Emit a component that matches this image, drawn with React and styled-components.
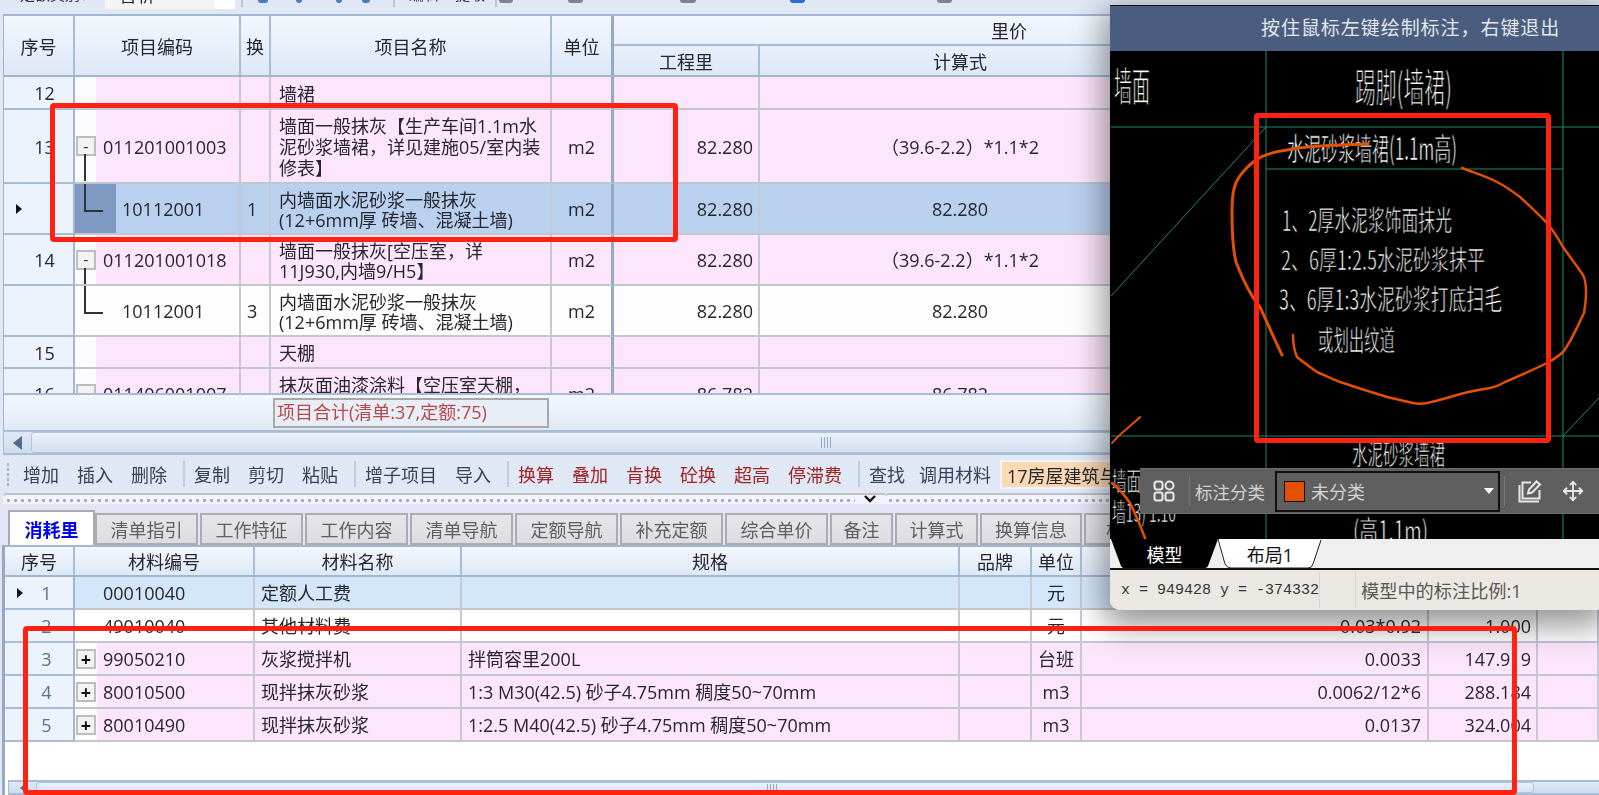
import React from "react";
import styled, { createGlobalStyle } from "styled-components";
import { Move } from "lucide-react";

const GlobalStyle = createGlobalStyle`
  html, body {
    margin: 0;
    padding: 0;
    background: #fff;
    overflow: hidden;
  }
  * {
    box-sizing: border-box;
  }
`;

const UI_FONT = `"Open Sans", "Noto Sans CJK SC", sans-serif`;
const UPPER_COLS = "71px 166px 30px 281px 62px 146px 402px 242px";
const LOWER_COLS = "70px 180px 207px 498px 72px 50px 347px 109px 61px";
const PINK = "#fde5fb";

const Page = styled.div`
  position: relative;
  width: 1599px;
  height: 795px;
  overflow: hidden;
  font-family: ${UI_FONT};
  font-size: 18px;
  color: #26262e;
`;

const Main = styled.div`
  width: 1599px;
  height: 795px;
  display: flex;
  flex-direction: column;
  background: #e0e8f6;
  filter: blur(0.45px);
`;

/* top toolbar, cut off by the screenshot */
const TopBar = styled.div`
  height: 14px;
  flex: none;
  display: flex;
  align-items: flex-end;
  overflow: hidden;
  padding-left: 20px;
  background: #e0e8f6;
`;

const TopLabel = styled.span`
  margin-bottom: 11px;
  margin-left: ${p => p.$ml || 0}px;
  line-height: 18px;
  white-space: nowrap;
  font-size: 15px;
  color: #334;
`;

const TopCombo = styled.div`
  width: 130px;
  height: 14px;
  margin: 0 0 5px 10px;
  padding: 0 14px;
  background: #f4f4f4;
  border-right: 20px solid #fff;
  line-height: 0;
  font-size: 18px;
`;

const TopChip = styled.i`
  width: ${p => p.$w || 14}px;
  height: ${p => p.$h || 8}px;
  margin: 0 0 ${p => p.$mb || 11}px ${p => p.$ml}px;
  border-radius: 0 0 3px 3px;
  background: ${p => p.$c || "#7d8490"};
`;

const TopSep = styled.i`
  width: 2px;
  height: 14px;
  margin: 0 0 7px ${p => p.$ml}px;
  background: #bcc4d2;
`;

const GridArea = styled.div`
  margin-left: 3px;
  border-left: 1px solid #9fb3cf;
  width: 1596px;
  flex: none;
`;

const HeaderGrid = styled.div`
  display: grid;
  grid-template-columns: ${p => p.$cols};
  grid-template-rows: ${p => p.$rows};
  border-top: 2px solid #a3b6d0;
  border-bottom: 2px solid #a3b6d0;
  background: linear-gradient(#f3f7fe, #dde8f6);
`;

const HeadCell = styled.div`
  display: flex;
  align-items: center;
  justify-content: center;
  grid-row: ${p => p.$row || "auto"};
  grid-column: ${p => p.$col || "auto"};
  border-right: ${p => (p.$thick ? "3px solid #93a9c8" : "2px solid #a9bcd6")};
  border-bottom: ${p => (p.$under ? "2px solid #a9bcd6" : "0")};
  ${p => p.$noRight && "border-right: 0;"}
  white-space: nowrap;
`;

const Body = styled.div`
  height: ${p => p.$h}px;
  overflow: hidden;
`;

const Row = styled.div`
  display: grid;
  grid-template-columns: ${p => p.$cols};
  height: ${p => p.$h}px;
  background: ${p => p.$bg};
`;

const Cell = styled.div`
  display: flex;
  align-items: center;
  min-width: 0;
  padding: 2px ${p => p.$pad ?? 0}px 0;
  justify-content: ${p => p.$align || "flex-start"};
  border-right: ${p => (p.$thick ? "3px solid #93a9c8" : "2px solid #c6c8d2")};
  border-bottom: 2px solid #c3c5cf;
  line-height: ${p => p.$lh || 21}px;
  white-space: nowrap;
  overflow: hidden;
`;

const SeqCell = styled(Cell)`
  position: relative;
  justify-content: center;
  background: #edf3fc;
  border-right: 2px solid #a3b6d0;
  border-bottom: 2px solid #a9bcd6;
  color: ${p => p.$tone || "inherit"};
  padding-left: ${p => p.$shift || 0}px;
`;

const RowArrow = styled.i`
  position: absolute;
  left: 12px;
  top: 50%;
  margin-top: -5px;
  border-left: 6px solid #111;
  border-top: 5px solid transparent;
  border-bottom: 5px solid transparent;
`;

const CodeCell = styled(Cell)`
  padding: 0;
  overflow: visible;
`;

const TreeSlot = styled.div`
  flex: none;
  width: ${p => p.$w}px;
  height: 100%;
  display: flex;
  align-items: ${p => (p.$elbow ? "flex-start" : "center")};
  padding-left: ${p => (p.$elbow ? 9 : 1)}px;
  background: ${p => p.$bg || "#fbfcfe"};
`;

const Toggle = styled.span`
  position: relative;
  width: 20px;
  height: 20px;
  flex: none;
  display: flex;
  align-items: center;
  justify-content: center;
  border: 2px solid #bdbdbd;
  background: #f3f3f3;
  color: #111;
  font-size: ${p => (p.$plus ? 18 : 15)}px;
  font-weight: ${p => (p.$plus ? 700 : 400)};
  line-height: 1;
  &::after {
    content: "";
    display: ${p => (p.$line ? "block" : "none")};
    position: absolute;
    left: 6px;
    top: 100%;
    width: 2px;
    height: ${p => p.$line}px;
    background: #333;
  }
`;

const Elbow = styled.span`
  width: 19px;
  height: 28px;
  border-left: 2px solid #333;
  border-bottom: 2px solid #333;
`;

const CodeText = styled.span`
  padding-left: ${p => p.$pad}px;
  padding-top: 2px;
`;

const NameCell = styled(Cell)`
  padding-left: 8px;
  white-space: pre;
`;

/* summary strip below the upper grid */
const SummaryBar = styled.div`
  height: 37px;
  flex: none;
  padding: 3px 0 0 269px;
  margin-left: 3px;
  border-left: 1px solid #9fb3cf;
  border-top: 2px solid #a9bcd6;
  background: linear-gradient(#f3f7fe, #e1e9f6);
`;

const SummaryBox = styled.div`
  width: 276px;
  height: 30px;
  padding-left: 2px;
  border: 2px solid #a8a8a8;
  background: #e8eef8;
  color: #b8474a;
  line-height: 25px;
  white-space: nowrap;
`;

const HScroll = styled.div`
  flex: none;
  height: ${p => p.$h}px;
  display: flex;
  align-items: stretch;
  margin-left: 3px;
  border: 1px solid #a9bcd6;
  border-width: 2px 0 2px 1px;
  background: linear-gradient(#dfe8f5, #cfdcee);
`;

const ScrollArrow = styled.div`
  width: 27px;
  flex: none;
  display: flex;
  align-items: center;
  justify-content: center;
  &::before {
    content: "";
    border-right: ${p => p.$s * 1.4}px solid #4f6a8d;
    border-top: ${p => p.$s}px solid transparent;
    border-bottom: ${p => p.$s}px solid transparent;
  }
`;

const ScrollThumb = styled.div`
  width: ${p => p.$w}px;
  flex: none;
  display: flex;
  align-items: center;
  justify-content: center;
  border: 1px solid #b3c4dc;
  border-radius: 3px;
  background: linear-gradient(#e9f0fa, #d5e1f1);
`;

const ThumbGrip = styled.i`
  width: ${p => p.$w}px;
  height: ${p => p.$h}px;
  margin-left: ${p => p.$ml || 0}px;
  background: repeating-linear-gradient(90deg, #92a9c8 0 1px, transparent 1px 3px);
`;

const ActionBar = styled.div`
  height: 38px;
  flex: none;
  position: relative;
  display: flex;
  align-items: center;
  gap: 18px;
  padding-left: 23px;
  white-space: nowrap;
  background: #e0e8f6;
  &::before {
    content: "";
    position: absolute;
    left: 6px;
    top: 7px;
    width: 4px;
    height: 24px;
    background: radial-gradient(circle, #a8b0c0 1.2px, transparent 1.5px) 0 0 / 4px 5px;
  }
`;

const Action = styled.span`
  flex: none;
  margin-left: ${p => p.$ml || 0}px;
  color: ${p => (p.$hot ? "#a02424" : "#37415a")};
`;

const ActionSep = styled.i`
  flex: none;
  width: 2px;
  height: 26px;
  margin: 0 -9px 0 -2px;
  background: #c4cad6;
`;

const LibraryTag = styled.span`
  flex: none;
  margin-left: -9px;
  width: 200px;
  height: 29px;
  padding-left: 5px;
  line-height: 28px;
  background: #fbd9b2;
  border: 2px solid #f2f4fa;
`;

const Splitter = styled.div`
  height: 17px;
  flex: none;
  display: flex;
  align-items: flex-start;
  padding: 0 0 0 3px;
  background: #e2e5f6;
`;

const DotRail = styled.div`
  width: ${p => p.$w}px;
  height: 11px;
  flex: none;
  border-top: 2px solid #c0c2c8;
  border-radius: 4px 0 0 0;
  background: radial-gradient(circle, #a2a7b6 1.3px, transparent 1.7px) 2px 1px / 7px 9px repeat-x #f1f3fa;
`;

const FoldButton = styled.div`
  width: 30px;
  height: 11px;
  flex: none;
  display: flex;
  align-items: flex-start;
  justify-content: center;
  background: #f3f1fc;
  border-top: 2px solid #c0c2c8;
`;

const TabStrip = styled.div`
  height: 35px;
  flex: none;
  display: flex;
  align-items: flex-end;
  gap: 2px;
  padding-left: 8px;
  white-space: nowrap;
  background: #e2e5f6;
`;

const Tab = styled.div`
  flex: none;
  width: ${p => p.$w}px;
  height: ${p => (p.$active ? 35 : 32)}px;
  margin-right: ${p => (p.$active ? -2 : 0)}px;
  display: flex;
  align-items: center;
  justify-content: center;
  overflow: hidden;
  border: 2px solid #ababb0;
  border-bottom: ${p => (p.$active ? "0" : "2px solid #ababb0")};
  background: ${p => (p.$active ? "#fff" : "linear-gradient(#e5e5ea, #dcdce1)")};
  color: ${p => (p.$active ? "#0000f0" : "#5d5d63")};
  font-weight: ${p => (p.$active ? 700 : 400)};
`;

const LowerArea = styled.div`
  flex: 1;
  min-height: 0;
  margin-left: 2px;
  border-left: 3px solid #98a8c0;
  display: flex;
  flex-direction: column;
  background: #fff;
`;

const LowerBlank = styled.div`
  flex: 1;
`;

/* floating annotation window */
const Float = styled.div`
  position: absolute;
  left: 1110px;
  top: 5px;
  width: 489px;
  height: 605px;
  display: flex;
  flex-direction: column;
  overflow: hidden;
  border-bottom-left-radius: 10px;
  background: #ebe8e4;
`;

const FloatShadow = styled.div`
  position: absolute;
  left: 1110px;
  top: 5px;
  width: 489px;
  height: 605px;
  border-bottom-left-radius: 10px;
  box-shadow: 0 10px 32px 6px rgba(0, 0, 0, 0.42);
`;

const FloatTitle = styled.div`
  height: 46px;
  flex: none;
  padding-left: 151px;
  border-top: 1px solid #111;
  background: #4a5d7e;
  color: #e3e7ef;
  font-family: "Liberation Serif", "Noto Sans CJK SC", serif;
  font-size: 19px;
  letter-spacing: 0.95px;
  line-height: 45px;
  white-space: nowrap;
`;

const Canvas = styled.div`
  position: relative;
  height: 488px;
  flex: none;
  background: #000;
  svg {
    display: block;
  }
`;

const CadText = styled.text`
  font-family: "Noto Sans CJK SC", sans-serif;
  fill: #fff;
  stroke: #000;
  stroke-width: ${p => (p.$big ? 1.1 : 0.75)}px;
  paint-order: fill stroke;
`;

const MarkBar = styled.div`
  position: absolute;
  left: 30px;
  top: 417px;
  right: 0;
  height: 46px;
  display: flex;
  align-items: center;
  background: #5f5f5f;
  border-top: 1px solid #6d6d6d;
  border-bottom: 1px solid #6d6d6d;
  color: #d2d2d2;
`;

const MarkIcon = styled.span`
  flex: none;
  display: flex;
  margin-left: ${p => p.$ml}px;
  color: #e8e8e8;
`;

const MarkSep = styled.i`
  flex: none;
  width: 1px;
  height: 30px;
  margin-left: ${p => p.$ml}px;
  background: #787878;
`;

const MarkLabel = styled.span`
  flex: none;
  margin-left: 5px;
  font-size: 17.5px;
  white-space: nowrap;
`;

const MarkSelect = styled.div`
  flex: none;
  width: 225px;
  height: 41px;
  margin-left: 10px;
  padding: 0 0 0 7px;
  display: flex;
  align-items: center;
  gap: 6px;
  border: 2px solid #111;
`;

const Swatch = styled.i`
  width: 21px;
  height: 21px;
  flex: none;
  background: #e25000;
  border: 1px solid #111;
`;

const Caret = styled.i`
  margin-left: auto;
  margin-right: 4px;
  border-top: 6px solid #fff;
  border-left: 5px solid transparent;
  border-right: 5px solid transparent;
`;

const SheetTabs = styled.div`
  height: 31px;
  flex: none;
  background: #efefef;
  border-bottom: 2px solid #111;
  display: flex;
  padding-left: 1px;
`;

const SheetTab = styled.div`
  position: relative;
  width: ${p => p.$w}px;
  height: 29px;
  display: flex;
  align-items: center;
  justify-content: center;
  color: ${p => (p.$on ? "#fff" : "#111")};
  font-size: 18px;
`;

const SheetShape = styled.svg`
  position: absolute;
  left: 0;
  top: 0;
`;

const SheetLabel = styled.span`
  position: relative;
`;

const StatusBar = styled.div`
  flex: 1;
  display: flex;
  align-items: center;
  white-space: nowrap;
  background: #ebe8e4;
`;

const Coords = styled.span`
  width: 210px;
  height: 36px;
  padding-left: 11px;
  flex: none;
  line-height: 38px;
  border-right: 1px solid #d8d6d2;
  font-family: "Liberation Mono", monospace;
  font-size: 15px;
  color: #333;
`;

const StatusGap = styled.span`
  width: 36px;
  height: 36px;
  flex: none;
  border-right: 1px solid #d8d6d2;
`;

const ScaleText = styled.span`
  padding-left: 5px;
  font-size: 18.2px;
  color: #5b5753;
`;

/* red marks drawn on the screenshot by hand */
const RedFrame = styled.div`
  position: absolute;
  left: ${p => p.$x}px;
  top: ${p => p.$y}px;
  width: ${p => p.$w}px;
  height: ${p => p.$h}px;
  border: 5px solid #ff2212;
  border-radius: 4px;
`;

const UPPER_ROWS = [
  { h: 33, seq: "12", tree: "blank", name: "墙裙", bg: PINK },
  {
    h: 74, seq: "13", tree: "minus", line: 27, code: "011201001003",
    name: "墙面一般抹灰【生产车间1.1m水\n泥砂浆墙裙，详见建施05/室内装\n修表】",
    unit: "m2", qty: "82.280", expr: "（39.6-2.2）*1.1*2", bg: PINK,
  },
  {
    h: 51, tree: "elbow", active: true, code: "10112001", swap: "1",
    name: "内墙面水泥砂浆一般抹灰\n(12+6mm厚 砖墙、混凝土墙)",
    unit: "m2", qty: "82.280", expr: "82.280", bg: "#b9d0ee",
  },
  {
    h: 51, seq: "14", tree: "minus", line: 16, code: "011201001018",
    name: "墙面一般抹灰[空压室，详\n11J930,内墙9/H5】",
    unit: "m2", qty: "82.280", expr: "（39.6-2.2）*1.1*2", bg: PINK,
  },
  {
    h: 51, tree: "elbow", code: "10112001", swap: "3",
    name: "内墙面水泥砂浆一般抹灰\n(12+6mm厚 砖墙、混凝土墙)",
    unit: "m2", qty: "82.280", expr: "82.280", bg: "#fdfdfe",
  },
  { h: 32, seq: "15", tree: "blank", name: "天棚", bg: PINK },
  {
    h: 51, seq: "16", tree: "minus", code: "011406001007",
    name: "抹灰面油漆涂料【空压室天棚，\n详见建施05】",
    unit: "m2", qty: "86.782", expr: "86.782", bg: PINK,
  },
];

const TABS = [
  ["消耗里", 87], ["清单指引", 103], ["工作特征", 103], ["工作内容", 103],
  ["清单导航", 103], ["定额导航", 103], ["补充定额", 103], ["综合单价", 103],
  ["备注", 63], ["计算式", 83], ["换算信息", 102], ["相关", 80],
];

const LOWER_ROWS = [
  { seq: "1", code: "00010040", name: "定额人工费", unit: "元", bg: "#d4e6fa", active: true },
  { seq: "2", code: "49010040", name: "其他材料费", unit: "元", qty: "0.03*0.92", rate: "1.000", bg: "#fff" },
  { seq: "3", plus: true, code: "99050210", name: "灰浆搅拌机", spec: "拌筒容里200L", unit: "台班", qty: "0.0033", rate: "147.919", bg: PINK },
  { seq: "4", plus: true, code: "80010500", name: "现拌抹灰砂浆", spec: "1:3 M30(42.5) 砂子4.75mm 稠度50~70mm", unit: "m3", qty: "0.0062/12*6", rate: "288.184", bg: PINK },
  { seq: "5", plus: true, code: "80010490", name: "现拌抹灰砂浆", spec: "1:2.5 M40(42.5) 砂子4.75mm 稠度50~70mm", unit: "m3", qty: "0.0137", rate: "324.004", bg: PINK },
];

const CAD_TEXT = [
  { t: "墙面", x: 1114, y: 101, f: 40, l: 36, big: true },
  { t: "踢脚(墙裙)", x: 1355, y: 102, f: 40, l: 97, big: true },
  { t: "水泥砂浆墙裙(1.1m高)", x: 1287, y: 160, f: 31, l: 170 },
  { t: "1、2厚水泥浆饰面抹光", x: 1282, y: 231, f: 28, l: 170 },
  { t: "2、6厚1:2.5水泥砂浆抹平", x: 1281, y: 270, f: 27, l: 204 },
  { t: "3、6厚1:3水泥砂浆打底扫毛", x: 1279, y: 310, f: 28, l: 223 },
  { t: "或划出纹道", x: 1318, y: 351, f: 28, l: 77 },
  { t: "水泥砂浆墙裙", x: 1352, y: 465, f: 28, l: 93 },
  { t: "(高1.1m)", x: 1353, y: 541, f: 28, l: 75 },
  { t: "墙面", x: 1112, y: 491, f: 26, l: 29 },
  { t: "墙13) 1:10", x: 1112, y: 522, f: 26, l: 64 },
];

const CAD_LINES = [
  "M1266 51V539", "M1563 51V539", "M1111 127H1599", "M1266 169H1563",
  "M1266 127L1111 296", "M1111 436H1599", "M1563 436L1599 398",
];

const PEN_STROKES = [
  { w: 3, d: "M1368 144C1340 145 1310 145 1287 150C1265 153 1255 158 1243 172C1234 182 1232 192 1232 212C1232 235 1233 250 1236 262C1243 280 1250 295 1260 307L1275 340L1282 355" },
  { w: 2.5, d: "M1462 168C1475 173 1488 177 1497 182C1505 186 1512 191 1520 197C1530 206 1538 214 1546 222C1553 230 1558 238 1563 247C1570 257 1577 266 1583 275C1587 283 1587 295 1584 313C1578 325 1571 342 1563 352C1558 357 1552 360 1547 363C1533 370 1519 376 1505 382C1500 385 1495 387 1490 388C1478 390 1467 392 1457 395C1447 398 1437 401 1427 403C1422 404 1417 404 1413 403C1404 401 1396 399 1387 397C1371 392 1355 387 1340 382C1332 379 1324 375 1317 372C1310 367 1303 362 1297 357C1294 350 1293 343 1293 335" },
  { w: 2, d: "M1140 417C1131 426 1120 433 1112 443" },
  { w: 2.5, d: "M1112 483C1120 490 1126 497 1130 503C1136 515 1141 527 1145 538" },
];

const UpperRow = ({ r }) => (
  <Row $cols={UPPER_COLS} $h={r.h} $bg={r.bg}>
    <SeqCell $shift={12}>
      {r.active && <RowArrow />}
      {r.seq}
    </SeqCell>
    <CodeCell>
      {r.tree === "elbow" ? (
        <TreeSlot $w={41} $elbow $bg={r.active ? "#7f9ac3" : r.bg}>
          <Elbow />
        </TreeSlot>
      ) : (
        <TreeSlot $w={21}>
          {r.tree === "minus" && <Toggle $line={r.line}>-</Toggle>}
        </TreeSlot>
      )}
      {r.code && <CodeText $pad={r.tree === "elbow" ? 6 : 7}>{r.code}</CodeText>}
    </CodeCell>
    <Cell $pad={6}>{r.swap}</Cell>
    <NameCell $lh={r.h === 74 ? 21 : 20}>{r.name}</NameCell>
    <Cell $align="center" $thick>{r.unit}</Cell>
    <Cell $align="flex-end" $pad={5}>{r.qty}</Cell>
    <Cell $align="center">{r.expr}</Cell>
    <Cell />
  </Row>
);

const LowerRow = ({ r }) => (
  <Row $cols={LOWER_COLS} $h={33} $bg={r.bg}>
    <SeqCell $tone="#56718f" $shift={15}>
      {r.active && <RowArrow />}
      {r.seq}
    </SeqCell>
    <CodeCell>
      <TreeSlot $w={22} $bg={r.plus ? "#fdfdfe" : "transparent"}>
        {r.plus && <Toggle $plus>+</Toggle>}
      </TreeSlot>
      <CodeText $pad={6}>{r.code}</CodeText>
    </CodeCell>
    <Cell $pad={6}>{r.name}</Cell>
    <Cell $pad={6}>{r.spec}</Cell>
    <Cell />
    <Cell $align="center">{r.unit}</Cell>
    <Cell $align="flex-end" $pad={6}>{r.qty}</Cell>
    <Cell $align="flex-end" $pad={5}>{r.rate}</Cell>
    <Cell />
  </Row>
);

const CadDrawing = () => (
  <svg width="489" height="488" viewBox="1110 51 489 488">
    {CAD_LINES.map(d => (
      <path key={d} d={d} stroke="#1a8c6a" strokeWidth="1" fill="none" />
    ))}
    {CAD_TEXT.map(c => (
      <CadText key={c.t + c.y} x={c.x} y={c.y} fontSize={c.f} textLength={c.l} lengthAdjust="spacingAndGlyphs" $big={c.big}>
        {c.t}
      </CadText>
    ))}
    {PEN_STROKES.map(s => (
      <path key={s.d} d={s.d} stroke="#e25000" strokeWidth={s.w} fill="none" strokeLinecap="round" />
    ))}
  </svg>
);

const TilesIcon = () => (
  <svg width="22" height="22" viewBox="0 0 22 22" fill="none" stroke="currentColor" strokeWidth="2">
    <rect x="1.5" y="1.5" width="8" height="8" rx="2.5" />
    <rect x="12.5" y="1.5" width="8" height="8" rx="4" />
    <rect x="1.5" y="12.5" width="8" height="8" rx="2" />
    <rect x="12.5" y="12.5" width="8" height="8" rx="2" />
  </svg>
);

const NoteIcon = () => (
  <svg width="24" height="24" viewBox="0 0 24 24" fill="none" stroke="currentColor" strokeWidth="2">
    <path d="M1.5 6V22.5H21" />
    <path d="M13 3.5H4.5V19.5H21.5V11" />
    <path d="M10 14.5L11 10.5L18.5 2.5L22 5.5L14 13.5Z" />
  </svg>
);

export default function App() {
  return (
    <Page>
      <GlobalStyle />
      <Main>
        <TopBar>
          <TopLabel>定额类别：</TopLabel>
          <TopCombo>普析</TopCombo>
          <TopSep $ml={6} />
          <TopChip $ml={15} $w={10} $c="#4a78c4" />
          <TopChip $ml={28} $w={6} $c="#4a78c4" />
          <TopChip $ml={34} $w={6} $h={6} $c="#4a78c4" />
          <TopChip $ml={20} $w={8} $h={6} $c="#4a78c4" />
          <TopSep $ml={23} />
          <TopLabel $ml={14}>编辑</TopLabel>
          <TopLabel $ml={16}>提取</TopLabel>
          <TopSep $ml={10} />
          <TopChip $ml={2} />
          <TopChip $ml={55} $w={15} />
          <TopChip $ml={97} $w={16} />
          <TopChip $ml={94} $w={15} $c="#2a6fd0" />
          <TopChip $ml={132} $w={15} />
        </TopBar>

        <GridArea>
          <HeaderGrid $cols={UPPER_COLS} $rows="30px 29px">
            <HeadCell $row="1 / 3">序号</HeadCell>
            <HeadCell $row="1 / 3">项目编码</HeadCell>
            <HeadCell $row="1 / 3">换</HeadCell>
            <HeadCell $row="1 / 3">项目名称</HeadCell>
            <HeadCell $row="1 / 3" $thick>单位</HeadCell>
            <HeadCell $col="6 / 9" $under $noRight>里价</HeadCell>
            <HeadCell>工程里</HeadCell>
            <HeadCell>计算式</HeadCell>
            <HeadCell />
          </HeaderGrid>
          <Body $h={316}>
            {UPPER_ROWS.map(r => (
              <UpperRow key={r.code + r.name} r={r} />
            ))}
          </Body>
        </GridArea>

        <SummaryBar>
          <SummaryBox>项目合计(清单:37,定额:75)</SummaryBox>
        </SummaryBar>

        <HScroll $h={25}>
          <ScrollArrow $s={7} />
          <ScrollThumb $w={1590}>
            <ThumbGrip $w={11} $h={11} />
          </ScrollThumb>
        </HScroll>

        <ActionBar>
          <Action>增加</Action>
          <Action>插入</Action>
          <Action>删除</Action>
          <ActionSep />
          <Action>复制</Action>
          <Action>剪切</Action>
          <Action>粘贴</Action>
          <ActionSep />
          <Action>增子项目</Action>
          <Action>导入</Action>
          <ActionSep />
          <Action $hot>换算</Action>
          <Action $hot>叠加</Action>
          <Action $hot>肯换</Action>
          <Action $hot>砼换</Action>
          <Action $hot>超高</Action>
          <Action $hot>停滞费</Action>
          <ActionSep />
          <Action>查找</Action>
          <Action $ml={-4}>调用材料</Action>
          <LibraryTag>17房屋建筑与装饰</LibraryTag>
        </ActionBar>

        <Splitter>
          <DotRail $w={852} />
          <FoldButton>
            <svg width="14" height="8" viewBox="0 0 14 8" fill="none" stroke="#111" strokeWidth="2.4">
              <path d="M2 1L7 6L12 1" />
            </svg>
          </FoldButton>
          <DotRail $w={714} />
        </Splitter>

        <TabStrip>
          {TABS.map(([label, w], i) => (
            <Tab key={label} $w={w} $active={i === 0}>{label}</Tab>
          ))}
        </TabStrip>

        <LowerArea>
          <HeaderGrid $cols={LOWER_COLS} $rows="28px">
            <HeadCell>序号</HeadCell>
            <HeadCell>材料编号</HeadCell>
            <HeadCell>材料名称</HeadCell>
            <HeadCell>规格</HeadCell>
            <HeadCell>品牌</HeadCell>
            <HeadCell>单位</HeadCell>
            <HeadCell />
            <HeadCell />
            <HeadCell />
          </HeaderGrid>
          {LOWER_ROWS.map(r => (
            <LowerRow key={r.seq} r={r} />
          ))}
          <LowerBlank />
          <HScroll $h={15}>
            <ScrollArrow $s={4} />
            <ScrollThumb $w={1498}>
              <ThumbGrip $w={11} $h={7} $ml={-25} />
            </ScrollThumb>
          </HScroll>
        </LowerArea>
      </Main>

      <FloatShadow />
      <Float>
        <FloatTitle>按住鼠标左键绘制标注，右键退出</FloatTitle>
        <Canvas>
          <CadDrawing />
          <MarkBar>
            <MarkIcon $ml={13}><TilesIcon /></MarkIcon>
            <MarkSep $ml={14} />
            <MarkLabel>标注分类</MarkLabel>
            <MarkSelect>
              <Swatch />
              未分类
              <Caret />
            </MarkSelect>
            <MarkSep $ml={4} />
            <MarkIcon $ml={13}><NoteIcon /></MarkIcon>
            <MarkIcon $ml={20}><Move size={22} strokeWidth={2} /></MarkIcon>
          </MarkBar>
        </Canvas>
        <SheetTabs>
          <SheetTab $w={107} $on>
            <SheetShape width="107" height="29" viewBox="0 0 107 29">
              <path d="M0 0H107L97 27Q96 29 94 29H13Q11 29 10 27Z" fill="#000" />
            </SheetShape>
            <SheetLabel>模型</SheetLabel>
          </SheetTab>
          <SheetTab $w={104}>
            <SheetShape width="104" height="29" viewBox="0 0 104 29">
              <path d="M0 0L7 25Q9 29 13 29H90Q94 29 95 25L103 1" fill="#fff" stroke="#222" strokeWidth="1" />
            </SheetShape>
            <SheetLabel>布局1</SheetLabel>
          </SheetTab>
        </SheetTabs>
        <StatusBar>
          <Coords>x = 949428 y = -374332</Coords>
          <StatusGap />
          <ScaleText>模型中的标注比例:1</ScaleText>
        </StatusBar>
      </Float>

      <RedFrame $x={50} $y={103} $w={628} $h={139} />
      <RedFrame $x={1254} $y={113} $w={297} $h={330} />
      <RedFrame $x={23} $y={626} $w={1494} $h={169} />
    </Page>
  );
}
